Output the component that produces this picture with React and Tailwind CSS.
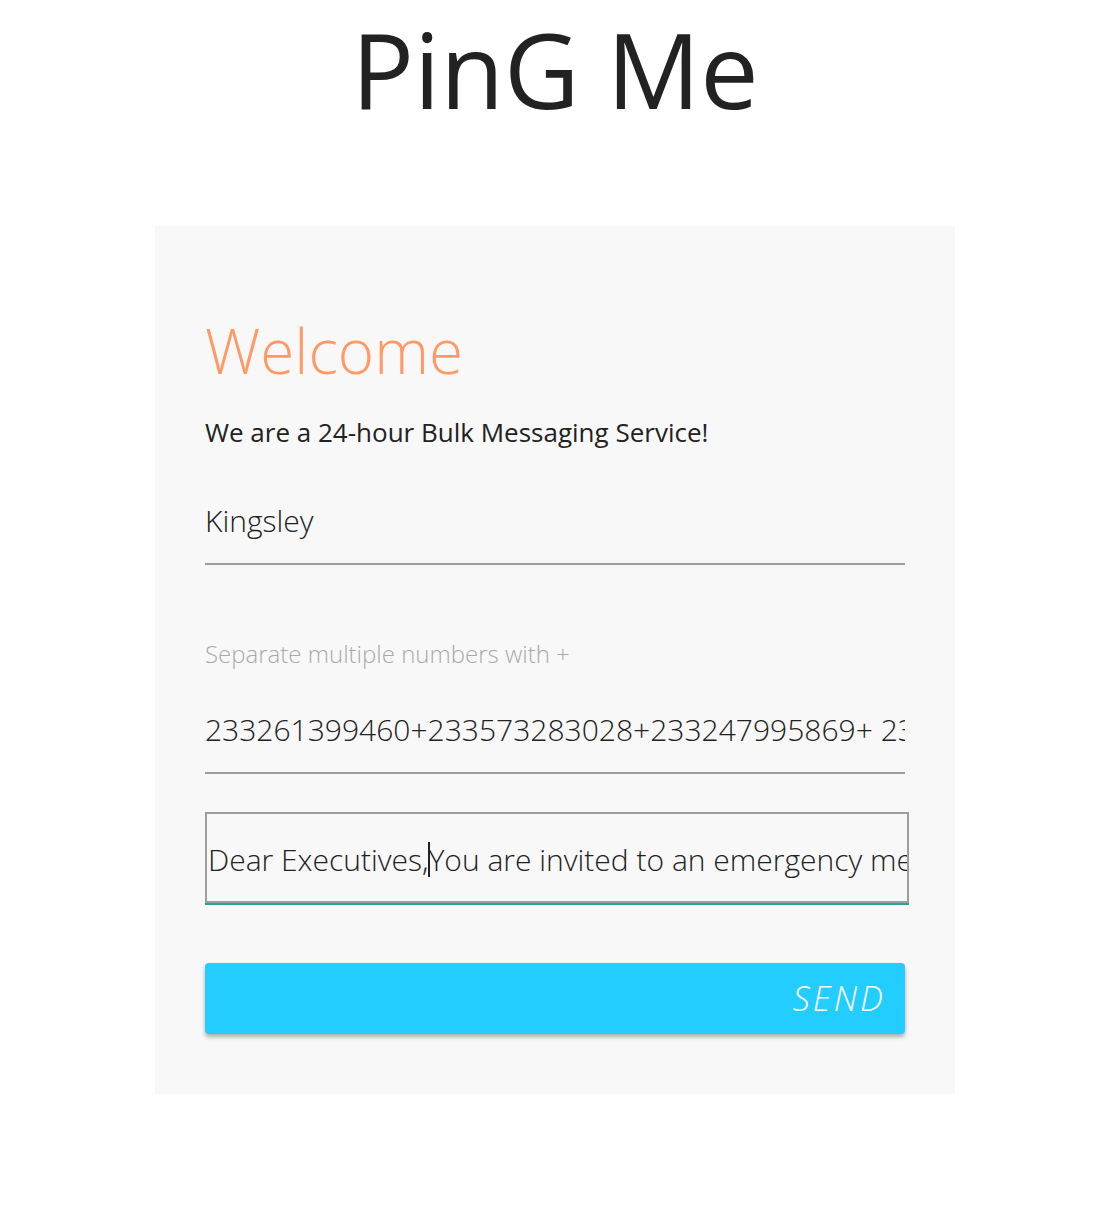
export default function App() {
  return (
    <div className="min-h-[1220px] bg-white pl-[12px] font-['Open_Sans',sans-serif] text-[#222]">
      <h1 className="pt-[17px] text-center text-[104px] font-normal leading-[104px] text-[#222]">
        PinG Me
      </h1>

      <div className="mx-auto mt-[105px] w-[800px] bg-[#f8f8f8] px-[50px] pb-[60px] pt-[93px]">
        <h2 className="text-[62px] font-light leading-[62px] text-[#ff9966]">Welcome</h2>
        <p className="mt-[38px] text-[26px] leading-[26px] text-[#222]">
          We are a 24-hour Bulk Messaging Service!
        </p>

        <input
          type="text"
          defaultValue="Kingsley"
          className="mt-[33px] block h-[87px] w-full border-b-2 border-[#9e9e9e] bg-transparent text-[30px] font-light text-[#222] outline-none"
        />

        <p className="mt-[77px] text-[24px] font-light leading-[24px] text-[#aaa]">
          Separate multiple numbers with +
        </p>
        <input
          type="text"
          defaultValue="233261399460+233573283028+233247995869+ 233244567812"
          className="mt-[21px] block h-[87px] w-full border-b-2 border-[#9e9e9e] bg-transparent text-[30px] font-light text-[#222] outline-none"
        />

        <div className="mt-[38px] h-[91px] w-[704px] overflow-hidden border-2 border-b-0 border-[#9e9e9e] shadow-[inset_0_-2px_0_#9e9e9e]">
          <div className="flex h-[87px] items-center whitespace-nowrap pl-[1px] pt-[3px] text-[30px] font-light text-[#222]">
            <span className="shrink-0">Dear Executives,</span>
            <span className="-mr-[2px] inline-block h-[35px] w-[2px] shrink-0 bg-[#222]" />
            <span className="shrink-0">You are invited to an emergency meeting at the conference room</span>
          </div>
        </div>
        <div className="h-[2px] w-[704px] bg-[#26a69a]" />

        <button
          type="button"
          className="mt-[58px] flex h-[71px] w-full items-center justify-end rounded-[4px] bg-[#24cdff] pr-[19px] text-[34px] font-light italic tracking-[3px] text-white shadow-[0_3px_4px_rgba(0,0,0,0.3)]"
        >
          SEND
        </button>
      </div>
    </div>
  );
}
